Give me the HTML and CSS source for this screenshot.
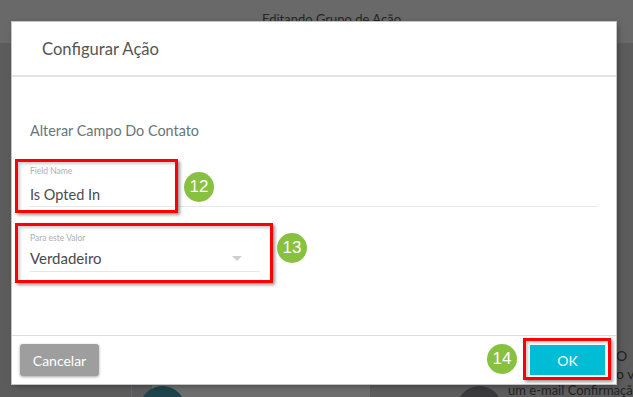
FILE: index.html
```html
<!DOCTYPE html>
<html lang="pt-BR">
<head>
<meta charset="UTF-8" />
<title>Configurar Ação</title>
<link rel="stylesheet" href="styles.css">
</head>
<body>

<!-- Page behind the dialog -->
<div class="page">
  <div class="page-top">Editando Grupo de Ação</div>
  <div class="page-main">
    <div class="steps">
      <div class="step step-teal">
        <span class="step-dot"></span>
        <p class="step-text">Envie ao contato o e-<br>mail "Confirmação Opt-In".</p>
      </div>
      <div class="step step-dark">
        <span class="step-dot"></span>
        <p class="step-text"><span class="edge">O</span><span class="edge">o ve</span>um e-mail Confirmação</p>
      </div>
    </div>
  </div>
</div>

<div class="overlay">
  <div class="modal">
    <div class="modal-header">Configurar Ação</div>

    <div class="modal-body">
      <div class="section-title">Alterar Campo Do Contato</div>

      <div class="field">
        <label class="field-label">Field Name</label>
        <div class="field-value">Is Opted In</div>
      </div>

      <div class="field field-select">
        <label class="field-label">Para este Valor</label>
        <div class="field-value">
          <span>Verdadeiro</span>
          <span class="caret"></span>
        </div>
      </div>
    </div>

    <div class="modal-footer">
      <button class="btn btn-cancel">Cancelar</button>
      <button class="btn btn-ok">OK</button>
    </div>
  </div>

  <!-- Tutorial annotations -->
  <div class="mark mark-field"></div>
  <div class="mark mark-select"></div>
  <div class="mark mark-ok"></div>
  <span class="badge badge-12">12</span>
  <span class="badge badge-13">13</span>
  <span class="badge badge-14">14</span>
</div>

</body>
</html>
```

FILE: styles.css
```css
body {
  margin: 0;
  width: 633px;
  height: 397px;
  overflow: hidden;
  position: relative;
  font-family: Lato, 'Open Sans', sans-serif;
  background: #5c5c5c;
}

/* background page (already dimmed) */
.page-top {
  height: 43px;
  box-sizing: border-box;
  padding: 11px 0 0 30px;
  background: #696969;
  color: #262626;
  font-size: 13px;
  text-align: center;
}
.page-main {
  height: 354px;
  background: #5c5c5c;
  overflow: hidden;
}
.steps {
  display: flex;
  padding-top: 300px;
}
.step {
  display: flex;
  align-items: flex-start;
  flex: none;
}
.step-dot {
  width: 45px;
  height: 45px;
  border-radius: 50%;
  margin-top: 43px;
  flex: none;
}
.step-text {
  margin: 4px 0 0 10px;
  font-size: 13px;
  line-height: 17.5px;
  color: #222;
  white-space: nowrap;
}
.step-teal {
  margin-left: 131px;
  padding-left: 8px;
  width: 230px;
  border-left: 1px dashed #4f7a2f;
  background: linear-gradient(90deg, transparent 20px, #6e6e6e 20px);
  border-radius: 0 40px 0 0;
}
.step-teal .step-dot { background: #1d434b; }
.step-dark {
  margin-left: 87px;
}
.step-dark .step-dot { background: #3a3a3c; }
.step-dark .step-text { margin-left: 6px; }
.edge {
  display: block;
  padding-left: 108px;
  font-size: 14px;
}

/* dialog */
.overlay {
  position: absolute;
  inset: 0;
}
.modal {
  margin: 22px 0 0 12px;
  width: 604px;
  background: #fff;
  box-shadow: 0 0 0 1px #c4c4c4, 2px 2px 6px rgba(0,0,0,0.35);
}
.modal-header {
  height: 53px;
  display: flex;
  align-items: center;
  padding-left: 30px;
  font-size: 16.6px;
  color: #555;
  border-bottom: 2px solid #e4e4e4;
}
.modal-body {
  height: 258px;
  box-sizing: border-box;
  padding: 45px 18px 0;
}
.section-title {
  font-size: 14.4px;
  line-height: 18px;
  color: #66767a;
}
.field {
  margin-top: 26px;
  padding-bottom: 1px;
  border-bottom: 1px solid #e8e8e8;
}
.field-label {
  display: block;
  font-size: 8.5px;
  line-height: 11px;
  color: #aeaeae;
}
.field-value {
  margin-top: 8px;
  font-size: 14.5px;
  line-height: 20px;
  color: #4a4a4a;
}
.field-select {
  width: 230px;
  padding-bottom: 3px;
}
.field-select .field-value {
  margin-top: 4px;
  font-size: 15px;
  display: flex;
  align-items: center;
  justify-content: space-between;
}
.caret {
  width: 0;
  height: 0;
  margin-right: 18px;
  border-left: 5px solid transparent;
  border-right: 5px solid transparent;
  border-top: 5px solid #cfcfcf;
}
.modal-footer {
  height: 48px;
  border-top: 1px solid #dcdcdc;
  display: flex;
  align-items: center;
  justify-content: space-between;
  padding: 0 11px 0 8px;
}
.btn {
  border: none;
  color: #fff;
  font-family: Lato, sans-serif;
  font-size: 14px;
  padding: 0;
}
.btn-cancel {
  width: 79px;
  height: 32px;
  background: #9e9e9e;
  border-radius: 3px;
  box-shadow: 0 1px 3px rgba(0,0,0,0.35);
}
.btn-ok {
  width: 75px;
  height: 30px;
  background: #00bcd4;
}

/* annotations */
.mark {
  position: absolute;
  box-sizing: border-box;
  border: 3px solid #ff0000;
  box-shadow: 2px 2px 3px rgba(0,0,0,0.4), inset 2px 2px 3px rgba(0,0,0,0.2);
}
.mark-field { left: 15px; top: 159px; width: 163px; height: 54px; }
.mark-select { left: 15px; top: 223px; width: 258px; height: 60px; }
.mark-ok { left: 523px; top: 338px; width: 88px; height: 42px; }
.badge {
  position: absolute;
  width: 30px;
  height: 30px;
  border-radius: 50%;
  background: #88c040;
  color: #fff;
  font-family: 'Liberation Sans', Arial, sans-serif;
  font-size: 17px;
  line-height: 30px;
  text-align: center;
}
.badge-12 { left: 184px; top: 172px; }
.badge-13 { left: 277px; top: 233px; }
.badge-14 { left: 487px; top: 344px; }
```
